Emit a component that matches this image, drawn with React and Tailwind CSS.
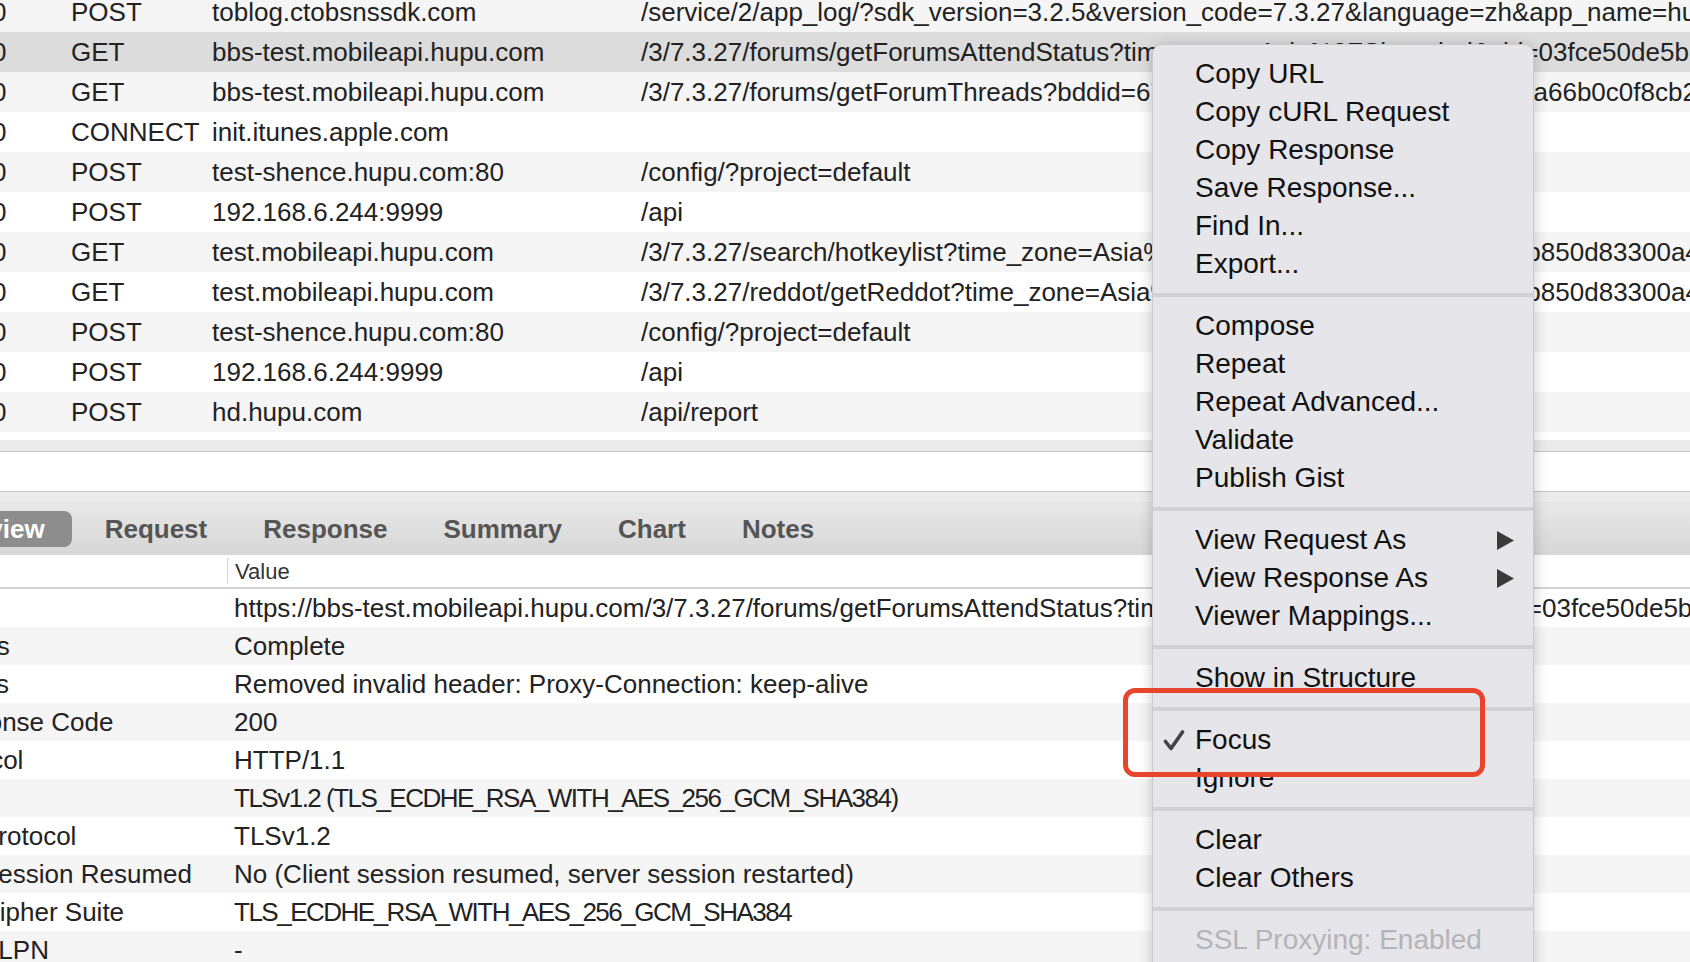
import React from 'react';

const rows = [
  { code: '200', method: 'POST', host: 'toblog.ctobsnssdk.com', path: '/service/2/app_log/?sdk_version=3.2.5&version_code=7.3.27&language=zh&app_name=hupu&device_platform=iphone' },
  { code: '200', method: 'GET', host: 'bbs-test.mobileapi.hupu.com', path: '/3/7.3.27/forums/getForumsAttendStatus?time_zone=Asia%2FShanghai&cid=03fce50de5b1a7c2e9d4f08b', selected: true },
  { code: '200', method: 'GET', host: 'bbs-test.mobileapi.hupu.com', path: '/3/7.3.27/forums/getForumThreads?bddid=67&sort=0&page=1&v=1&client=5la66b0c0f8cb2e41d7a9' },
  { code: '200', method: 'CONNECT', host: 'init.itunes.apple.com', path: '' },
  { code: '200', method: 'POST', host: 'test-shence.hupu.com:80', path: '/config/?project=default' },
  { code: '200', method: 'POST', host: '192.168.6.244:9999', path: '/api' },
  { code: '200', method: 'GET', host: 'test.mobileapi.hupu.com', path: '/3/7.3.27/search/hotkeylist?time_zone=Asia%2FShanghai&night=0&sign=ddfb850d83300a4e1c7d9f2' },
  { code: '200', method: 'GET', host: 'test.mobileapi.hupu.com', path: '/3/7.3.27/reddot/getReddot?time_zone=Asia%2FShanghai&night=0&sign=d1b850d83300a4e1c7d9f2' },
  { code: '200', method: 'POST', host: 'test-shence.hupu.com:80', path: '/config/?project=default' },
  { code: '200', method: 'POST', host: '192.168.6.244:9999', path: '/api' },
  { code: '200', method: 'POST', host: 'hd.hupu.com', path: '/api/report' },
];

// label offsets: the name column is scrolled to the left in the screenshot
const details = [
  { name: '', shift: '', value: 'https://bbs-test.mobileapi.hupu.com/3/7.3.27/forums/getForumsAttendStatus?time_zone=Asia%2FShanghai&cid=03fce50de5b1a7c2e9d4f08b' },
  { name: 'Status', shift: '-ml-[64px]', value: 'Complete' },
  { name: 'Notes', shift: '-ml-[59px]', value: 'Removed invalid header: Proxy-Connection: keep-alive' },
  { name: 'Response Code', shift: '-ml-[73px]', value: '200' },
  { name: 'Protocol', shift: '-ml-[72px]', value: 'HTTP/1.1' },
  { name: '', shift: '', value: 'TLSv1.2 (TLS_ECDHE_RSA_WITH_AES_256_GCM_SHA384)', caps: true },
  { name: 'Protocol', shift: '-ml-[19px]', value: 'TLSv1.2' },
  { name: 'Session Resumed', shift: '-ml-[19px]', value: 'No (Client session resumed, server session restarted)' },
  { name: 'Cipher Suite', shift: '-ml-[19px]', value: 'TLS_ECDHE_RSA_WITH_AES_256_GCM_SHA384', caps: true },
  { name: 'ALPN', shift: '-ml-[19px]', value: '-' },
];

const menuGroups = [
  ['Copy URL', 'Copy cURL Request', 'Copy Response', 'Save Response...', 'Find In...', 'Export...'],
  ['Compose', 'Repeat', 'Repeat Advanced...', 'Validate', 'Publish Gist'],
  ['View Request As', 'View Response As', 'Viewer Mappings...'],
  ['Show in Structure'],
  ['Focus', 'Ignore'],
  ['Clear', 'Clear Others'],
  ['SSL Proxying: Enabled'],
];

const tabs = ['Request', 'Response', 'Summary', 'Chart', 'Notes'];

function MenuItem({ label }) {
  const hasArrow = label === 'View Request As' || label === 'View Response As';
  const checked = label === 'Focus';
  const disabled = label.startsWith('SSL');
  return (
    <div className={disabled ? 'relative flex h-[38px] items-center pl-[42px] text-[#b4b4b8]' : 'relative flex h-[38px] items-center pl-[42px] text-[#111]'}>
      {checked && (
        <svg className="absolute left-[10px] top-[9px]" width="22" height="21" viewBox="0 0 22 21">
          <path d="M2.5 11.5 L8 18.5 L19.5 2" fill="none" stroke="#444" strokeWidth="3.6" strokeLinecap="round" strokeLinejoin="round" />
        </svg>
      )}
      <span>{label}</span>
      {hasArrow && (
        <svg className="ml-auto mr-[19px]" width="17" height="19" viewBox="0 0 17 19">
          <polygon points="0,0 17,9.5 0,19" fill="#3a3a3a" />
        </svg>
      )}
    </div>
  );
}

export default function App() {
  return (
    <div className="relative w-[1690px] h-[962px] overflow-hidden bg-white font-['Liberation_Sans',Arial,sans-serif] text-[26px] text-[#222]">

      {/* request list */}
      <div className="-mt-[8px]">
        {rows.map((r, i) => (
          <div
            key={i}
            className={r.selected ? 'flex h-[40px] items-center whitespace-nowrap bg-[#dcdcdc]' : i % 2 === 0 ? 'flex h-[40px] items-center whitespace-nowrap bg-[#f5f5f5]' : 'flex h-[40px] items-center whitespace-nowrap bg-white'}
          >
            <div className="w-[108px] -ml-[37px] shrink-0">{r.code}</div>
            <div className="w-[141px] shrink-0">{r.method}</div>
            <div className="w-[429px] shrink-0">{r.host}</div>
            <div className="shrink-0">{r.path}</div>
          </div>
        ))}
      </div>

      <div className="h-[8px] bg-white" />
      <div className="h-[12px] bg-[#ebebeb] border-b border-[#c4c4c4]" />
      <div className="h-[40px] bg-white border-b border-[#c4c4c4]" />
      <div className="h-[11px] bg-[#ececec] border-b border-[#e2e2e2]" />

      {/* tabs */}
      <div className="flex h-[52px] items-center bg-gradient-to-b from-[#e8e8e8] to-[#d6d6d6] whitespace-nowrap font-bold text-[#555]">
        <div className="-ml-[98px] flex h-[36px] items-center rounded-[8px] bg-[#8d8d8d] px-[27px] text-white">Overview</div>
        <div className="ml-[5px] flex">
          {tabs.map((t) => (
            <div key={t} className="px-[28px]">{t}</div>
          ))}
        </div>
      </div>

      {/* detail table */}
      <div className="flex h-[34px] items-center border-b-2 border-[#d4d4d4] text-[22px] text-[#333]">
        <div className="w-[227px] shrink-0" />
        <div className="h-[26px] w-px bg-[#d6d6d6]" />
        <div className="pl-[7px]">Value</div>
      </div>
      {details.map((d, i) => (
        <div
          key={i}
          className={i % 2 === 1 ? 'flex h-[38px] items-center whitespace-nowrap bg-[#f5f5f5]' : 'flex h-[38px] items-center whitespace-nowrap bg-white'}
        >
          <div className="w-[234px] shrink-0">
            {d.name && <span className={d.shift}>{d.name}</span>}
          </div>
          <div className={d.caps ? 'shrink-0 tracking-[-1.5px]' : 'shrink-0'}>{d.value}</div>
        </div>
      ))}

      {/* context menu */}
      <div className="absolute left-[1152px] top-[44px] w-[382px] rounded-t-[10px] border border-[#c9c9ce] bg-[#e5e5ea] pt-[10px] pb-[30px] text-[28px] shadow-[0_2px_14px_rgba(0,0,0,0.22)] whitespace-nowrap">
        {menuGroups.map((g, gi) => (
          <div key={gi}>
            {gi > 0 && (
              <div className="py-[10px]">
                <div className="h-[4px] bg-[#d0d0d5]" />
              </div>
            )}
            {g.map((label) => (
              <MenuItem key={label} label={label} />
            ))}
          </div>
        ))}
      </div>

      {/* annotation */}
      <div className="absolute left-[1123px] top-[688px] h-[89px] w-[362px] rounded-[12px] border-[5px] border-[#e9452d]" />
    </div>
  );
}
